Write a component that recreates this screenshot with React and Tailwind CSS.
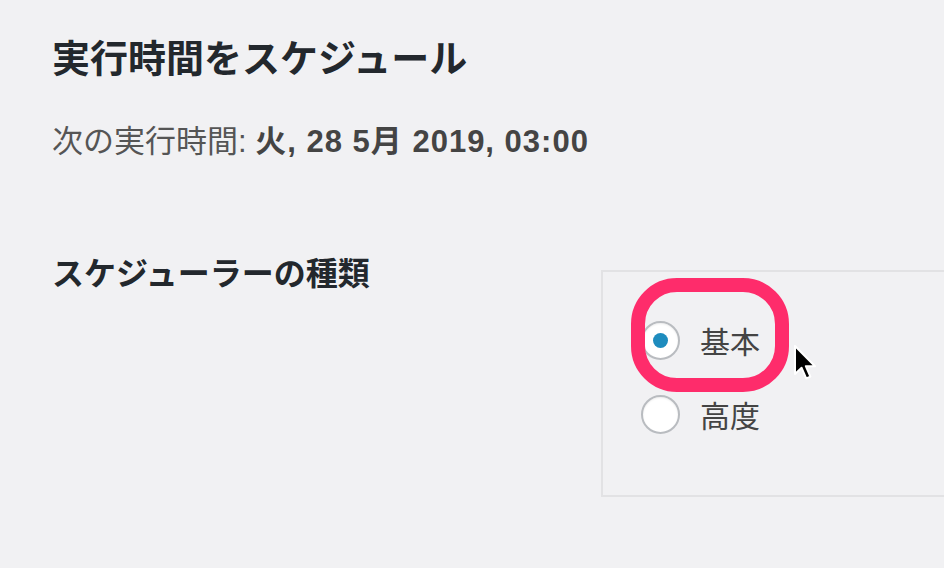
const font = { fontFamily: '"Noto Sans CJK JP", "Noto Sans", sans-serif' };
const mixed = { fontFamily: '"Liberation Sans", "Noto Sans CJK JP", sans-serif' };

function Radio({ checked, label }) {
  return (
    <label className="flex items-center h-[40px]">
      <span className="relative flex items-center justify-center w-[39px] h-[39px] rounded-full border-2 border-[#b9bcc0] bg-white shadow-[inset_0_1px_2px_rgba(0,0,0,0.08)]">
        {checked && <span className="w-[15px] h-[15px] rounded-full bg-[#1e8cbe]" />}
      </span>
      <span className="ml-[20px] text-[30px] leading-none text-[#444]">{label}</span>
    </label>
  );
}

function Cursor() {
  return (
    <svg width="26" height="38" viewBox="0 0 13 19" className="absolute left-[190px] top-[72px]">
      <path
        d="M1 1 L1 15 L4.3 11.9 L6.6 17.2 L8.7 16.3 L6.4 11.1 L11 11.1 Z"
        fill="#000"
        stroke="#fff"
        strokeWidth="1"
        strokeLinejoin="round"
      />
    </svg>
  );
}

export default function App() {
  return (
    <div className="w-[944px] h-[568px] overflow-hidden bg-[#f1f1f3] pl-[52px] pt-[30px]" style={font}>
      <h2 className="text-[38px] leading-[52px] font-bold text-[#23282d]">実行時間をスケジュール</h2>
      <p className="mt-[40px] text-[31px] leading-[40px] text-[#555]" style={mixed}>
        次の実行時間: <strong className="font-bold tracking-[1px] text-[#444]">火, 28 5月 2019, 03:00</strong>
      </p>
      <div className="flex mt-[88px]">
        <div className="w-[549px] shrink-0 text-[32px] leading-[42px] font-bold text-[#23282d]">スケジューラーの種類</div>
        <div className="relative mt-[20px] w-[400px] h-[227px] shrink-0 border-2 border-[#e2e2e4] pl-[38px] pt-[48px]">
          <div className="flex flex-col gap-[34px]">
            <Radio checked label="基本" />
            <Radio label="高度" />
          </div>
          <div className="absolute left-[28px] top-[6px] w-[158px] h-[114px] rounded-[46px] border-[14px] border-[#fe2c6b]" />
          <Cursor />
        </div>
      </div>
    </div>
  );
}
